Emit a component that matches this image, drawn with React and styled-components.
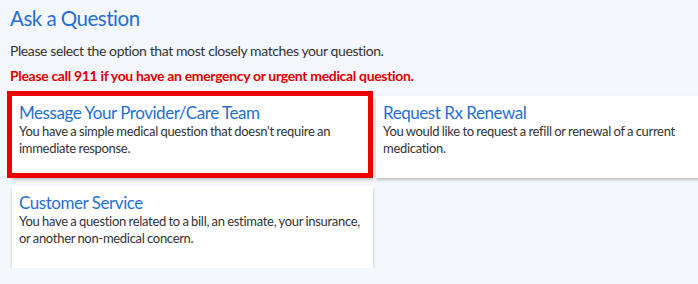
import React from "react";
import styled, { createGlobalStyle } from "styled-components";

const Global = createGlobalStyle`
  html, body { margin: 0; padding: 0; overflow: hidden; }
  body { background: #f4f7fb; font-family: Lato, "Noto Sans", sans-serif; }
`;

const Page = styled.div`
  padding: 4px 0 0 10px;
  width: 740px;
`;

const Heading = styled.h1`
  margin: 0;
  font-size: 20.5px;
  line-height: 28px;
  font-weight: 400;
  color: #1f6fd4;
  letter-spacing: -0.5px;
`;

const Intro = styled.p`
  margin: 9px 0 0;
  font-size: 14px;
  line-height: 20px;
  color: #333;
  letter-spacing: -0.4px;
`;

const Warning = styled.p`
  margin: 5px 0 0;
  font-size: 14px;
  line-height: 20px;
  font-weight: 700;
  color: #e00000;
  letter-spacing: -0.33px;
`;

const Grid = styled.div`
  display: grid;
  grid-template-columns: 361px 361px;
  column-gap: 3px;
  row-gap: 8px;
  margin: 10px 0 0 2px;
`;

const Card = styled.a`
  position: relative;
  display: block;
  height: 82px;
  box-sizing: border-box;
  padding: 7px 7px;
  background: #fff;
  box-shadow: 0 2px 3px rgba(0, 0, 0, 0.22);
  text-decoration: none;
  cursor: pointer;
`;

const Highlight = styled.span`
  position: absolute;
  top: -5px;
  left: -5px;
  right: 0;
  bottom: 0;
  border: 5px solid #ee0000;
  pointer-events: none;
`;

const CardTitle = styled.div`
  font-size: 17px;
  line-height: 20px;
  color: #1f6fd4;
  letter-spacing: -0.45px;
`;

const CardText = styled.div`
  font-size: 13px;
  line-height: 16.5px;
  color: #333;
  letter-spacing: -0.3px;
  word-spacing: -0.5px;
`;

const options = [
  {
    title: "Message Your Provider/Care Team",
    text: "You have a simple medical question that doesn't require an immediate response.",
    highlighted: true,
  },
  {
    title: "Request Rx Renewal",
    text: "You would like to request a refill or renewal of a current medication.",
  },
  {
    title: "Customer Service",
    text: "You have a question related to a bill, an estimate, your insurance, or another non-medical concern.",
  },
];

export default function App() {
  return (
    <>
      <Global />
      <Page>
        <Heading>Ask a Question</Heading>
        <Intro>Please select the option that most closely matches your question.</Intro>
        <Warning>Please call 911 if you have an emergency or urgent medical question.</Warning>
        <Grid>
          {options.map((o) => (
            <Card key={o.title}>
              <CardTitle>{o.title}</CardTitle>
              <CardText>{o.text}</CardText>
              {o.highlighted && <Highlight />}
            </Card>
          ))}
        </Grid>
      </Page>
    </>
  );
}
